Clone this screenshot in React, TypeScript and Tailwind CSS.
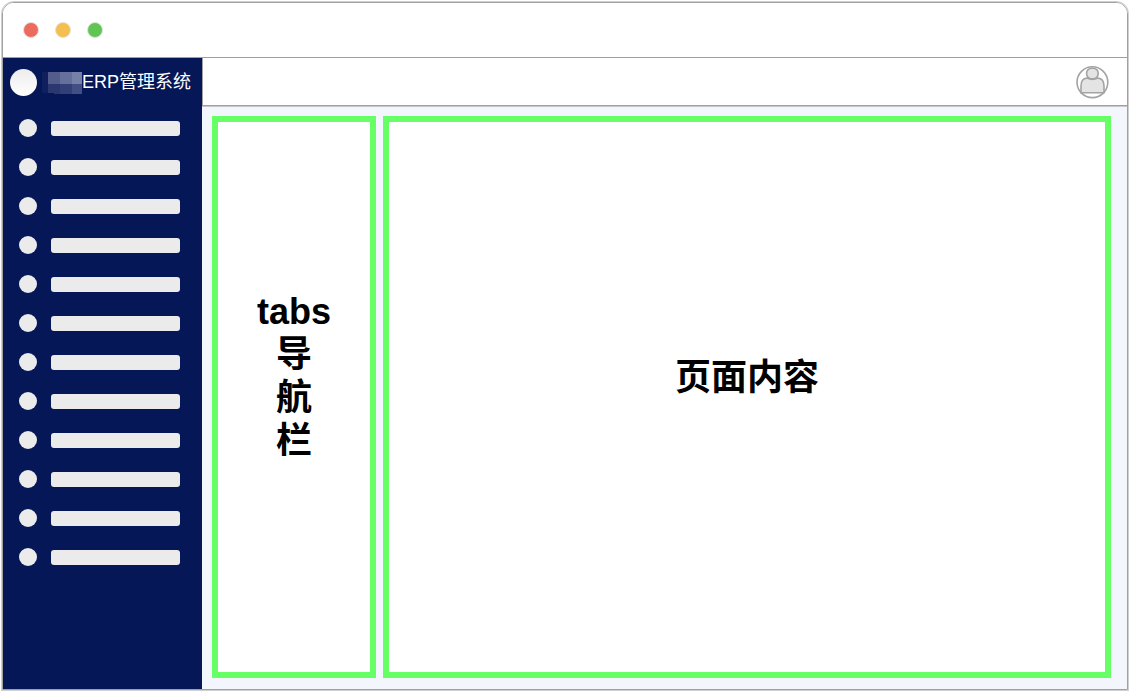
const menuItems = Array.from({ length: 12 }, (_, i) => i + 1);

function TitleBar() {
  return (
    <div className="flex h-[55px] shrink-0 items-center gap-4 border-b border-[#9c9f9a] bg-white pl-5">
      <span className="size-4 rounded-full border border-[#e8dcda] bg-[#ed6a5e]" />
      <span className="size-4 rounded-full border border-[#e8e0d2] bg-[#f5bf4f]" />
      <span className="size-4 rounded-full border border-[#dae6d8] bg-[#61c554]" />
    </div>
  );
}

function Mosaic() {
  return (
    <svg width="40" height="24" viewBox="0 0 40 24" shapeRendering="crispEdges" aria-hidden="true">
      <rect x="0" y="2" width="6" height="21" fill="#101f5e" />
      <rect x="6" y="2" width="12" height="12" fill="#535d8b" />
      <rect x="18" y="2" width="12" height="12" fill="#66709a" />
      <rect x="30" y="2" width="10" height="12" fill="#7780a6" />
      <rect x="6" y="14" width="12" height="9" fill="#2b386f" />
      <rect x="18" y="14" width="12" height="10" fill="#334078" />
      <rect x="30" y="14" width="10" height="10" fill="#434f84" />
      <rect x="12" y="23" width="6" height="1" fill="#2b386f" />
    </svg>
  );
}

function Sidebar() {
  return (
    <aside className="w-[199px] shrink-0 bg-[#061757]">
      <div className="flex h-12 items-center pl-[7px]">
        <span className="size-[27px] shrink-0 rounded-full bg-linear-to-b from-[#ececec] to-white" />
        <div className="ml-[5px] flex shrink-0 items-center whitespace-nowrap text-lg text-white">
          <Mosaic />
          <span>ERP管理系统</span>
        </div>
      </div>
      <nav aria-label="ERP管理系统">
        <ul className="flex flex-col gap-[21px] pt-[13px] pl-4">
          {menuItems.map((item) => (
            <li key={item} className="flex h-[18px] items-center gap-[14px]">
              <span className="size-[18px] rounded-full bg-[#ebebeb]" />
              <span className="h-[15px] w-[129px] rounded-[3px] bg-[#ebebeb]" />
            </li>
          ))}
        </ul>
      </nav>
    </aside>
  );
}

function UserIcon() {
  return (
    <svg width="34" height="34" viewBox="0 0 34 34" fill="none" stroke="#a3a3a3" strokeWidth="1.6" aria-hidden="true">
      <circle cx="17.4" cy="17.2" r="15.4" fill="#fff" />
      <path
        d="M6 27.7V21C6 16.2 8.2 13.4 12 13Q17.4 15.8 22.8 13C26.8 13.4 29 16.2 29 21V27.7Z"
        fill="#e4e4e4"
      />
      <rect x="11.6" y="3.2" width="11.6" height="10.6" rx="5" fill="#e4e4e4" />
    </svg>
  );
}

export default function App() {
  return (
    <div
      className="flex h-screen bg-white p-[2px] text-black"
      style={{ fontFamily: '"Liberation Sans", "Noto Sans CJK SC", sans-serif' }}
    >
      <div className="flex min-w-0 flex-1 flex-col overflow-hidden rounded-t-xl border border-[#a0a0a0] shadow-[0_0_0_1px_#d0d0d0]">
        <TitleBar />
        <div className="flex min-h-0 flex-1">
          <Sidebar />
          <div className="flex min-w-0 flex-1 flex-col bg-[#f3f6fc]">
            <header className="flex h-12 shrink-0 items-center justify-end border-b border-l border-[#a0a0a0] bg-white pr-[18px] shadow-[0_1px_0_#c8c8c8]">
              <button type="button" aria-label="用户">
                <UserIcon />
              </button>
            </header>
            <div className="flex min-h-0 flex-1 gap-[7px] pt-[10px] pr-4 pb-[11px] pl-[10px] text-4xl/[43px] font-bold">
              <section className="flex w-[164px] shrink-0 flex-col items-center justify-center border-6 border-[#66ff66] bg-white pb-[43px] text-center">
                <span>tabs</span>
                <span>导</span>
                <span>航</span>
                <span>栏</span>
              </section>
              <main className="flex min-w-0 flex-1 items-center justify-center border-6 border-[#66ff66] bg-white pb-10">
                页面内容
              </main>
            </div>
          </div>
        </div>
      </div>
    </div>
  );
}
